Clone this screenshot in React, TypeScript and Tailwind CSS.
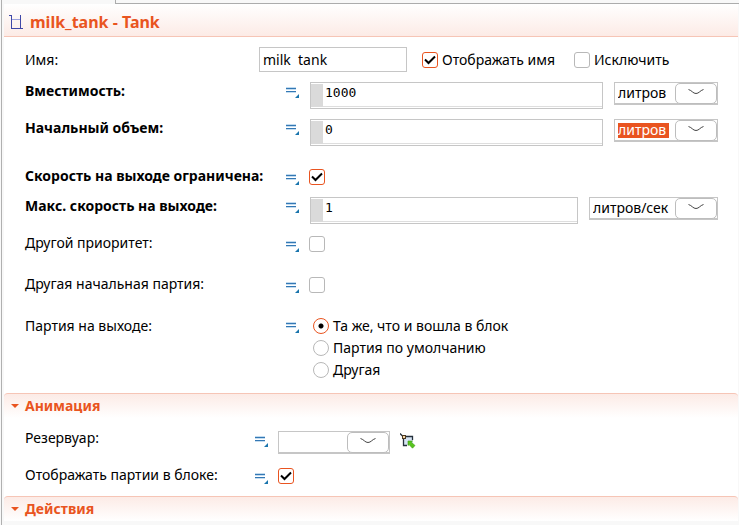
import { useId, type ReactNode } from "react";

function TankIcon() {
  return (
    <svg width="14" height="15" viewBox="0 0 14 15" fill="none" aria-hidden="true" shapeRendering="crispEdges">
      <path d="M0 .5h3M12 .5h-1M2.500 .5v13M11.500 .5v13M2 13.500h12" stroke="#3f48a8" />
      <path d="M3 4.500h8" stroke="#9aa0dc" />
    </svg>
  );
}

function ValueMenuButton() {
  return (
    <button type="button" aria-label="=" className="mt-[5px] h-[11px] w-[13px] shrink-0">
      <svg width="13" height="11" viewBox="0 0 13 11" aria-hidden="true" shapeRendering="crispEdges">
        <path d="M0 0h10v1H0zM0 2h10v1H0zM0 5h10v1H0z" fill="#c3dcf0" />
        <path d="M0 1h10v1H0zM0 4h10v1H0z" fill="#3478b4" />
        <path d="M13 7v4H9z" fill="#1a75ad" shapeRendering="auto" />
      </svg>
    </button>
  );
}

function ReservoirPickIcon() {
  return (
    <svg width="16" height="16" viewBox="0 0 16 16" aria-hidden="true">
      <rect x="4" y="4" width="9" height="8" fill="#d6e4f4" />
      <path d="M0 .5 3 3.500M3.500 5v7.500H7M5 3.500h7.500V7" fill="none" stroke="#25303c" strokeWidth="1.300" />
      <rect x="2.500" y="2.500" width="3" height="3" fill="#f6d9a8" stroke="#4c3a24" />
      <path d="M8 8h4.500l-1.200 1.200 3.700 3.300-2.500 2.700-3.500-3.600L8 12.500z" fill="#58c41e" stroke="#3c9a10" strokeWidth=".6" />
    </svg>
  );
}

function Check({ id, on = false, label }: { id?: string; on?: boolean; label?: string }) {
  return (
    <span className="relative block size-4 shrink-0">
      <input
        id={id}
        aria-label={label}
        type="checkbox"
        defaultChecked={on}
        className="peer block size-4 appearance-none rounded-[3px] border border-[#b8b8b8] bg-white checked:border-[#e95420]"
      />
      <svg
        viewBox="0 0 16 16"
        className="pointer-events-none absolute inset-0 hidden size-4 peer-checked:block"
        fill="none"
        stroke="#000"
        strokeWidth="2"
        aria-hidden="true"
      >
        <path d="M3 7.500 6.500 11 13 4.500" />
      </svg>
    </span>
  );
}

function Radio({ name, label, on = false }: { name: string; label: string; on?: boolean }) {
  return (
    <label className="flex h-[22px] items-start gap-1">
      <input
        type="radio"
        name={name}
        defaultChecked={on}
        className="mt-px size-4 shrink-0 appearance-none rounded-full border border-[#b8b8b8] bg-white checked:border-[#e95420] checked:bg-[radial-gradient(circle,#000_2px,transparent_3px)]"
      />
      {label}
    </label>
  );
}

function Combo({
  id,
  label,
  options,
  width,
  selected = false,
}: {
  id?: string;
  label?: string;
  options: string[];
  width: string;
  selected?: boolean;
}) {
  return (
    <div className={`relative h-[23px] shrink-0 ${width}`}>
      <select
        id={id}
        aria-label={label}
        className={`block h-full w-full appearance-none border border-b-2 border-[#c6c6c6] pl-[3px] text-sm leading-5 ${
          selected
            ? "bg-[linear-gradient(#e95420,#e95420)] bg-[length:51px_15px] bg-[position:3px_3px] bg-no-repeat text-white"
            : "bg-white"
        }`}
      >
        {options.map((option) => (
          <option key={option} className="bg-white text-black">
            {option}
          </option>
        ))}
      </select>
      <span className="pointer-events-none absolute top-px right-px flex h-[21px] w-[42px] justify-center rounded-[5px] border border-[#bdbdbd] bg-white pt-[5px]">
        <svg width="16" height="6" viewBox="0 0 16 6" fill="none" stroke="#444" aria-hidden="true">
          <path d="M.5 .5C4 1.500 5 4.500 8 4.500S12 1.500 15.500 .5" />
        </svg>
      </span>
    </div>
  );
}

function CodeField({ id, value }: { id: string; value: string }) {
  return (
    <div className="flex h-[27px] min-w-0 flex-1 border border-[#c6c6c6] bg-white py-px">
      <span className="w-3 shrink-0 bg-[#dadada]" />
      <input
        id={id}
        defaultValue={value}
        className="min-w-0 flex-1 border-b border-[#dedede] pb-1 pl-0.5 font-['DejaVu_Sans_Mono',monospace] text-[13px] leading-4 outline-none"
      />
    </div>
  );
}

function Row({
  id,
  label,
  bold = false,
  boxed = false,
  short = false,
  children,
}: {
  id?: string;
  label: string;
  bold?: boolean;
  boxed?: boolean;
  short?: boolean;
  children: ReactNode;
}) {
  return (
    <div className="flex items-start">
      <label
        htmlFor={id}
        className={`shrink-0 whitespace-nowrap ${short ? "w-[230px]" : "w-[261px]"} ${bold ? "font-bold" : ""}`}
      >
        {label}
      </label>
      <div className={`flex min-w-0 flex-1 items-start ${boxed ? "gap-[11px]" : "gap-[10px] pt-0.5"}`}>
        <ValueMenuButton />
        {children}
      </div>
    </div>
  );
}

function SectionHeader({ title }: { title: string }) {
  return (
    <h2 className="flex h-[25px] items-center rounded-t border-t border-[#f6c5b6] bg-linear-to-b from-[#fcebe6] to-white pl-[7px] text-sm font-bold text-[#e95420]">
      <button type="button" className="flex items-center gap-1.5">
        <svg width="8" height="4" viewBox="0 0 8 4" fill="#e95420" aria-hidden="true">
          <path d="M0 0h8L4 4z" />
        </svg>
        {title}
      </button>
    </h2>
  );
}

export default function App() {
  const uid = useId();
  return (
    <div className="min-h-screen overflow-x-hidden bg-[#f8f8f8] pl-px font-['Noto_Sans','Open_Sans',sans-serif] text-sm leading-[18px] text-black">
      <div className="min-h-screen border-l border-[#b0b0b0] pl-0.5">
        <div className="flex h-1">
          <div className="w-[111px]" />
          <div className="flex-1 border-b border-l border-[#acacac]" />
        </div>
        <main className="mr-px bg-white">
          <header className="flex h-[33px] items-center gap-[7px] border-b border-[#f6c5b6] bg-linear-to-b from-white to-[#fcebe6] pt-1 pl-[5px]">
            <TankIcon />
            <h1 className="text-base font-bold text-[#e95420]">milk_tank - Tank</h1>
          </header>

          <section className="pr-5 pb-[10px] pl-[21px]">
            <div className="flex items-center pt-[10px]">
              <label htmlFor={`${uid}-name`} className="w-[234px] shrink-0">
                Имя:
              </label>
              <input
                id={`${uid}-name`}
                defaultValue="milk  tank"
                className="h-[25px] w-[148px] border border-[#c6c6c6] bg-white pl-[3px] outline-none"
              />
              <label className="ml-[15px] flex items-center gap-1 whitespace-nowrap">
                <Check on />
                Отображать имя
              </label>
              <label className="ml-[19px] flex items-center gap-1 whitespace-nowrap">
                <Check />
                Исключить
              </label>
            </div>

            <div className="mt-[10px]">
              <Row id={`${uid}-cap`} label="Вместимость:" bold boxed>
                <CodeField id={`${uid}-cap`} value="1000" />
                <Combo label="Вместимость" options={["литров"]} width="w-[104px]" />
              </Row>
            </div>
            <div className="mt-[10px]">
              <Row id={`${uid}-vol`} label="Начальный объем:" bold boxed>
                <CodeField id={`${uid}-vol`} value="0" />
                <Combo label="Начальный объем" options={["литров"]} width="w-[104px]" selected />
              </Row>
            </div>
            <div className="mt-[21px]">
              <Row id={`${uid}-lim`} label="Скорость на выходе ограничена:" bold>
                <Check id={`${uid}-lim`} on />
              </Row>
            </div>
            <div className="mt-3">
              <Row id={`${uid}-max`} label="Макс. скорость на выходе:" bold boxed>
                <CodeField id={`${uid}-max`} value="1" />
                <Combo label="Макс. скорость на выходе" options={["литров/сек"]} width="w-[129px]" />
              </Row>
            </div>
            <div className="mt-[10px]">
              <Row id={`${uid}-prio`} label="Другой приоритет:">
                <Check id={`${uid}-prio`} />
              </Row>
            </div>
            <div className="mt-[23px]">
              <Row id={`${uid}-batch`} label="Другая начальная партия:">
                <Check id={`${uid}-batch`} />
              </Row>
            </div>
            <div className="mt-6">
              <Row label="Партия на выходе:" boxed>
                <div role="radiogroup" aria-label="Партия на выходе" className="pl-[3px]">
                  <Radio name={`${uid}-out`} label="Та же, что и вошла в блок" on />
                  <Radio name={`${uid}-out`} label="Партия по умолчанию" />
                  <Radio name={`${uid}-out`} label="Другая" />
                </div>
              </Row>
            </div>
          </section>

          <SectionHeader title="Анимация" />
          <section className="pt-[11px] pr-5 pb-3 pl-[21px]">
            <Row id={`${uid}-res`} label="Резервуар:" short>
              <Combo id={`${uid}-res`} options={[""]} width="w-[112px]" />
              <button type="button" aria-label="Выбрать" className="mt-0.5">
                <ReservoirPickIcon />
              </button>
            </Row>
            <div className="mt-3">
              <Row id={`${uid}-show`} label="Отображать партии в блоке:" short>
                <Check id={`${uid}-show`} on />
              </Row>
            </div>
          </section>

          <SectionHeader title="Действия" />
        </main>
      </div>
    </div>
  );
}
